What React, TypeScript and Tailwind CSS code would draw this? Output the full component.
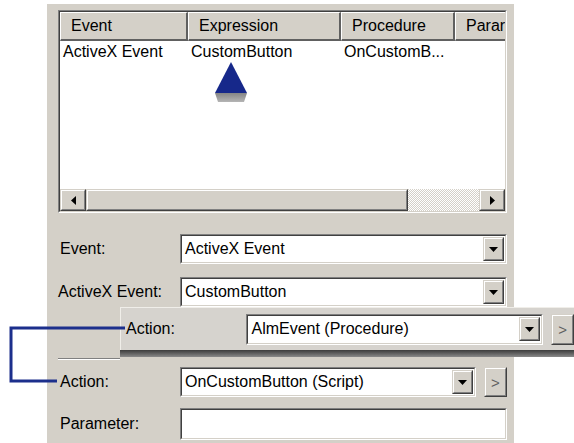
import React from "react";

const Sunken = ({ className = "", children }: { className?: string; children?: React.ReactNode }) => (
  <div className={`border border-t-[#808080] border-l-[#808080] border-b-white border-r-white ${className}`}>
    <div className="w-full h-full border border-t-[#404040] border-l-[#404040] border-b-[#d4d0c8] border-r-[#d4d0c8] bg-white relative overflow-hidden">
      {children}
    </div>
  </div>
);

const Raised = ({ className = "", children }: { className?: string; children?: React.ReactNode }) => (
  <div className={`border border-t-[#d4d0c8] border-l-[#d4d0c8] border-b-[#404040] border-r-[#404040] ${className}`}>
    <div className="w-full h-full border border-t-white border-l-white border-b-[#808080] border-r-[#808080] bg-[#d4d0c8] flex items-center justify-center">
      {children}
    </div>
  </div>
);

const DownTri = () => (
  <svg width="9" height="5" viewBox="0 0 9 5"><polygon points="0,0 9,0 4.5,5" fill="#000" /></svg>
);

const Combo = ({ text, className = "" }: { text: string; className?: string }) => (
  <Sunken className={className}>
    <div className="flex h-full items-center">
      <span className="flex-1 pl-[3px] text-[16px] leading-none text-black whitespace-nowrap">{text}</span>
      <Raised className="w-[21px] h-[24px] mr-[1px]">
        <DownTri />
      </Raised>
    </div>
  </Sunken>
);

const MoreBtn = ({ className = "" }: { className?: string }) => (
  <Raised className={className}>
    <span className="text-[15px] text-[#606060] leading-none">&gt;</span>
  </Raised>
);

export default function App() {
  return (
    <div className="relative w-[574px] h-[443px] bg-white overflow-hidden font-['Liberation_Sans',Arial,sans-serif] text-black">
      <div className="ml-[47px] mt-[4px] w-[467px] h-[439px] bg-[#d4d0c8] pl-[11px] pt-[6px] flex flex-col">
        {/* list view */}
        <Sunken className="w-[449px] h-[203px]">
          <div className="flex h-[29px] bg-[#d4d0c8] text-[16px] leading-none">
            {[
              ["Event", "w-[128px]"],
              ["Expression", "w-[153px]"],
              ["Procedure", "w-[114px]"],
              ["Parar", "w-[60px]"],
            ].map(([t, w]) => (
              <div key={t} className={`${w} shrink-0 h-full border-t border-l border-t-white border-l-white border-r-2 border-r-[#606060] border-b-2 border-b-[#606060] flex items-center pl-[10px] overflow-hidden whitespace-nowrap`}>
                {t}
              </div>
            ))}
          </div>
          <div className="flex text-[16px] leading-none mt-[3px]">
            <div className="w-[128px] shrink-0 pl-[3px]">ActiveX Event</div>
            <div className="w-[153px] shrink-0 pl-[3px]">CustomButton</div>
            <div className="w-[114px] shrink-0 pl-[3px]">OnCustomB...</div>
          </div>
          {/* scrollbar */}
          <div className="absolute left-0 right-0 bottom-0 h-[22px] flex bg-[#ebe9e5]">
            <Raised className="w-[26px] h-full">
              <svg width="5" height="9" viewBox="0 0 5 9"><polygon points="5,0 5,9 0,4.5" fill="#000" /></svg>
            </Raised>
            <Raised className="w-[322px] h-full" />
            <div className="flex-1 bg-[repeating-conic-gradient(#ffffff_0_25%,#d4d0c8_0_50%)] bg-[length:2px_2px]" />
            <Raised className="w-[26px] h-full">
              <svg width="5" height="9" viewBox="0 0 5 9"><polygon points="0,0 0,9 5,4.5" fill="#000" /></svg>
            </Raised>
          </div>
        </Sunken>

        {/* form */}
        <div className="flex flex-col mt-[21px] text-[16px] leading-none">
          <div className="flex items-center h-[30px]">
            <span className="w-[122px] pl-[2px]">Event:</span>
            <Combo text="ActiveX Event" className="w-[327px] h-[30px]" />
          </div>
          <div className="flex items-center h-[30px] mt-[13px]">
            <span className="w-[122px] pl-[0px]">ActiveX Event:</span>
            <Combo text="CustomButton" className="w-[327px] h-[30px]" />
          </div>
          <div className="h-[51px]" />
          <div className="w-[62px] h-[2px] border-t border-t-[#808080] border-b border-b-white" />
          <div className="flex items-center h-[30px] mt-[7px]">
            <span className="w-[122px] pl-[2px]">Action:</span>
            <Combo text="OnCustomButton (Script)" className="w-[296px] h-[30px]" />
            <MoreBtn className="w-[23px] h-[30px] ml-[8px]" />
          </div>
          <div className="flex items-center h-[32px] mt-[11px]">
            <span className="w-[122px] pl-[2px]">Parameter:</span>
            <Sunken className="w-[327px] h-[32px]" />
          </div>
        </div>
      </div>

      {/* floating action panel */}
      <div className="absolute left-[120px] top-[307px] w-[454px] h-[50px] bg-[#d6d3ce] flex flex-col">
        <div className="flex items-center h-[43px] border-t border-l border-t-[#f0eee9] border-l-[#f0eee9]">
          <span className="w-[126px] pl-[5px] text-[16px] leading-none">Action:</span>
          <Combo text="AlmEvent (Procedure)" className="w-[298px] h-[31px]" />
          <MoreBtn className="w-[23px] h-[31px] ml-[8px]" />
        </div>
        <div className="h-[7px] bg-gradient-to-b from-[#3c3c3c] to-[#8a8a8a]" />
      </div>

      {/* connector */}
      <svg className="absolute left-0 top-0" width="574" height="443" viewBox="0 0 574 443">
        <polyline points="125,328 11,328 11,381 57,381" fill="none" stroke="#1c2f8c" strokeWidth="3" />
        <defs>
          <linearGradient id="g" x1="0" y1="0" x2="0" y2="1">
            <stop offset="0" stopColor="#858585" />
            <stop offset="1" stopColor="#b5b5b5" />
          </linearGradient>
        </defs>
        <polygon points="231,62 215,93 247,93" fill="#16288a" />
        <polygon points="215,93 247,93 244,102 218,102" fill="url(#g)" />
      </svg>
    </div>
  );
}
